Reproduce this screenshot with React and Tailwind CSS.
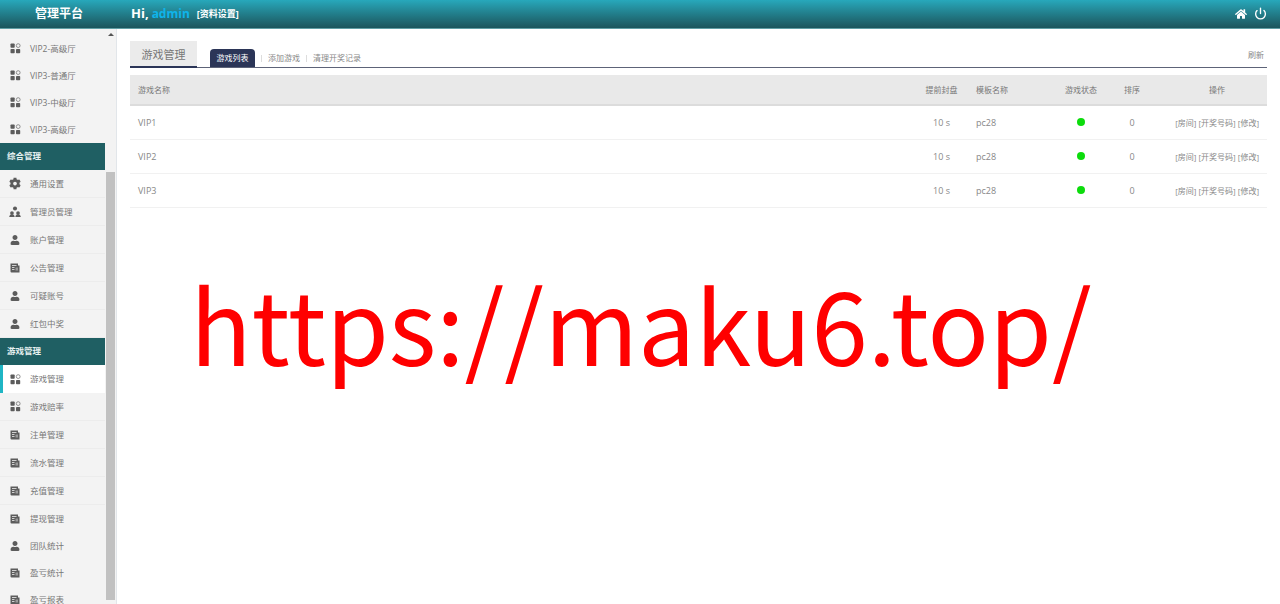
import { FaCog, FaUser, FaHome } from 'react-icons/fa';
import { Power } from 'lucide-react';

const font = 'font-["Open_Sans","Noto_Sans_CJK_SC",sans-serif]';

function AppsIcon() {
  return (
    <svg width="11" height="11" viewBox="0 0 11 11" fill="#5c5c5c">
      <rect x="0.5" y="0.5" width="4.2" height="4.2" rx="0.8" />
      <circle cx="8.2" cy="2.6" r="1.9" fill="none" stroke="#777" strokeWidth="0.8" />
      <rect x="0.5" y="6" width="4.2" height="4.2" rx="0.8" />
      <rect x="6" y="6" width="4.2" height="4.2" rx="0.8" />
    </svg>
  );
}

function NoteIcon() {
  return (
    <svg width="10" height="10" viewBox="0 0 10 10">
      <path d="M0.5 0.5h7.500v2h1.500v7h-8a1 1 0 0 1-1-1z" fill="#5c5c5c" />
      <path d="M2 2.500h4.500M2 4.500h2.500M2 6.500h2.500" stroke="#ddd" strokeWidth="0.9" />
      <rect x="5.500" y="4.500" width="2.500" height="3" fill="#999" />
    </svg>
  );
}

function UsersIcon() {
  return (
    <svg width="13" height="12" viewBox="0 0 13 12" fill="#5c5c5c">
      <circle cx="6.500" cy="2.300" r="2.200" />
      <circle cx="3.200" cy="7.200" r="2" />
      <path d="M0.300 11.500c0-1.800 1-2.800 2-2.800h1.800c1 0 2 1 2 2.800z" />
      <circle cx="9.800" cy="7.200" r="2" />
      <path d="M6.900 11.500c0-1.800 1-2.800 2-2.800h1.800c1 0 2 1 2 2.800z" />
    </svg>
  );
}

const icons = {
  apps: <AppsIcon />,
  note: <NoteIcon />,
  users: <UsersIcon />,
  user: <FaUser size={10} color="#5c5c5c" />,
  cog: <FaCog size={13} color="#5c5c5c" />,
};

const topItems = [
  { label: 'VIP2-高级厅', icon: 'apps', compact: true },
  { label: 'VIP3-普通厅', icon: 'apps', compact: true },
  { label: 'VIP3-中级厅', icon: 'apps', compact: true },
  { label: 'VIP3-高级厅', icon: 'apps', compact: true },
];

const generalItems = [
  { label: '通用设置', icon: 'cog' },
  { label: '管理员管理', icon: 'users' },
  { label: '账户管理', icon: 'user' },
  { label: '公告管理', icon: 'note' },
  { label: '可疑账号', icon: 'user' },
  { label: '红包中奖', icon: 'user' },
];

const gameItems = [
  { label: '游戏管理', icon: 'apps', active: true },
  { label: '游戏赔率', icon: 'apps' },
  { label: '注单管理', icon: 'note' },
  { label: '流水管理', icon: 'note' },
  { label: '充值管理', icon: 'note' },
  { label: '提现管理', icon: 'note', compact: true },
  { label: '团队统计', icon: 'user', compact: true },
  { label: '盈亏统计', icon: 'note', compact: true },
  { label: '盈亏报表', icon: 'note', compact: true },
];

const games = ['VIP1', 'VIP2', 'VIP3'];

const cols = 'grid grid-cols-[787px_49px_81px_68px_34px_118px] items-center';

function MenuItem({ item }) {
  const rowStyle = item.active
    ? 'h-[28px] border-l-[3px] border-l-[#1fb5c4] bg-white pl-[6px]'
    : item.compact
      ? 'h-[27px] pl-[9px]'
      : 'h-[28px] border-b border-[#ececec] pl-[9px]';

  return (
    <div className={`flex items-center text-[8.5px] ${rowStyle}`}>
      <span className="flex w-[12px] shrink-0 justify-center">{icons[item.icon]}</span>
      <span className="ml-[9px] pt-px text-[#777]">{item.label}</span>
    </div>
  );
}

function SectionTitle({ children }) {
  return (
    <div className="flex h-[27px] items-center bg-[#1f5f63] pb-px pl-[7px] text-[8.5px] font-bold text-[#e6f0f0]">
      {children}
    </div>
  );
}

function Sidebar() {
  return (
    <aside className="flex h-full w-[117px] shrink-0 overflow-hidden border-r border-[#e2e6ea] bg-[#f3f3f3]">
      <nav className="w-[105px] shrink-0 pt-[6px]">
        {topItems.map((item) => (
          <MenuItem key={item.label} item={item} />
        ))}
        <SectionTitle>综合管理</SectionTitle>
        {generalItems.map((item) => (
          <MenuItem key={item.label} item={item} />
        ))}
        <SectionTitle>游戏管理</SectionTitle>
        {gameItems.map((item) => (
          <MenuItem key={item.label} item={item} />
        ))}
      </nav>
      <div className="flex w-[11px] shrink-0 flex-col items-center">
        <div className="mt-[4px] h-0 w-0 border-x-[3px] border-b-[3px] border-x-transparent border-b-[#555]" />
        <div className="mt-[136px] h-[428px] w-[9px] bg-[#c1c1c1]" />
      </div>
    </aside>
  );
}

function GameTable() {
  return (
    <div className="mt-[7px] text-[8px] text-[#888]">
      <div className={`${cols} h-[31px] border-b-2 border-[#dcdcdc] bg-[#e9e9e9] text-[#777]`}>
        <div className="pl-2">游戏名称</div>
        <div className="text-center">提前封盘</div>
        <div className="pl-[10px]">模板名称</div>
        <div className="text-center">游戏状态</div>
        <div className="text-center">排序</div>
        <div className="pl-[18px] text-center">操作</div>
      </div>
      {games.map((name) => (
        <div key={name} className={`${cols} h-[34px] border-b border-[#f1f1f1]`}>
          <div className="pl-2 text-[9px]">{name}</div>
          <div className="text-center text-[9px]">10 s</div>
          <div className="pl-[10px] text-[9px]">pc28</div>
          <div className="flex justify-center">
            <span className="mb-px h-2 w-2 rounded-full bg-[#0cdc0c]" />
          </div>
          <div className="text-center text-[9px]">0</div>
          <div className="pr-2 text-right whitespace-nowrap">[房间] [开奖号码] [修改]</div>
        </div>
      ))}
    </div>
  );
}

export default function App() {
  return (
    <div className={`relative flex h-[604px] flex-col overflow-hidden bg-white ${font}`}>
      <header className="flex h-[29px] shrink-0 items-center border-b border-[#5f9ea4] bg-gradient-to-b from-[#27a8bb] to-[#1b555c] text-white">
        <div className="w-[117px] pl-[35px] text-[12px] font-bold">管理平台</div>
        <div className="ml-[14px] flex items-center">
          <span className="text-[13px] font-bold">Hi,</span>
          <span className="ml-[3px] text-[12px] font-bold text-[#0fb4ea]">admin</span>
          <span className="ml-[7px] text-[9px] font-bold">[资料设置]</span>
        </div>
        <div className="ml-auto flex items-center gap-[7px] pb-px pr-[13px]">
          <FaHome size={12} />
          <Power size={13} strokeWidth={2.5} />
        </div>
      </header>

      <div className="flex min-h-0 flex-1">
        <Sidebar />
        <main className="min-w-0 flex-1 pl-[13px] pr-[13px] pt-[12px]">
          <div className="flex h-[27px] items-end border-b border-[#5d6378]">
            <div className="-mb-px flex h-[27px] w-[67px] items-center justify-center border-b-2 border-[#2b3557] bg-[#ebebeb] pt-[3px] text-[11px] text-[#777]">
              游戏管理
            </div>
            <div className="ml-[13px] flex h-[18px] w-[45px] items-center justify-center rounded-t-[4px] bg-[#2b3557] text-[8px] text-white">
              游戏列表
            </div>
            <div className="ml-[6px] flex h-[18px] items-center text-[8px] text-[#888]">
              <span className="h-[7px] border-l border-[#ddd]" />
              <span className="ml-[6px]">添加游戏</span>
              <span className="ml-[6px] h-[7px] border-l border-[#ddd]" />
              <span className="ml-[6px]">清理开奖记录</span>
            </div>
            <div className="mb-[3px] ml-auto flex h-[18px] items-center pr-[3px] text-[8px] text-[#888]">刷新</div>
          </div>
          <GameTable />
        </main>
      </div>

      {/* watermark over the page */}
      <div className='pointer-events-none absolute left-[190px] top-[257px] whitespace-nowrap font-["Noto_Sans_CJK_SC",sans-serif] text-[101.5px] leading-[130px] text-[#ff0000]'>
        https://maku6.top/
      </div>
    </div>
  );
}
